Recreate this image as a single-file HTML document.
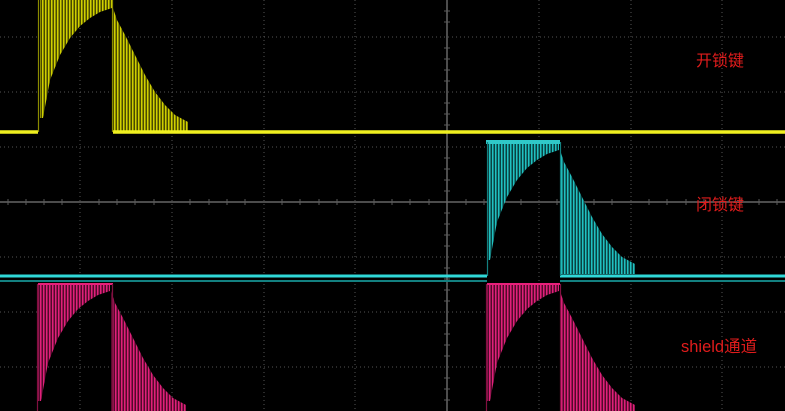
<!DOCTYPE html>
<html><head><meta charset="utf-8"><style>
html,body{margin:0;padding:0;background:#000;overflow:hidden}
svg{display:block}
.t{font-family:"Liberation Sans","Noto Sans CJK SC",sans-serif;font-size:16px;fill:#e01c1c}
</style></head><body>
<svg width="785" height="411" viewBox="0 0 785 411" xmlns="http://www.w3.org/2000/svg">
<defs>
<pattern id="py" width="3" height="6" patternUnits="userSpaceOnUse"><rect width="1.5" height="6" fill="#d0d000"/><rect x="1.5" width="1.5" height="6" fill="#4a4a00"/></pattern>
<pattern id="pc" width="3" height="6" patternUnits="userSpaceOnUse"><rect width="1.5" height="6" fill="#20c0c0"/><rect x="1.5" width="1.5" height="6" fill="#0a4040"/></pattern>
<pattern id="pm" width="3" height="6" patternUnits="userSpaceOnUse"><rect width="1.5" height="6" fill="#e0207a"/><rect x="1.5" width="1.5" height="6" fill="#500a2a"/></pattern>
<g id="env">
<polygon points="40,0 112,0 112,8 100,12 90,18 80,26 70,38 60,55 50,80 43,118 40,118"/>
<polygon points="113,132 113,8 117,20 125,35 135,55 145,75 155,92 165,105 175,115 188,122 188,132"/>
</g>
</defs>
<g stroke="#555" stroke-width="1" stroke-dasharray="1,3">
<line x1="80" y1="0" x2="80" y2="411"/><line x1="172" y1="0" x2="172" y2="411"/><line x1="264" y1="0" x2="264" y2="411"/><line x1="355" y1="0" x2="355" y2="411"/><line x1="539" y1="0" x2="539" y2="411"/><line x1="631" y1="0" x2="631" y2="411"/><line x1="722" y1="0" x2="722" y2="411"/>
<line x1="0" y1="37" x2="785" y2="37"/><line x1="0" y1="92" x2="785" y2="92"/><line x1="0" y1="147" x2="785" y2="147"/><line x1="0" y1="257" x2="785" y2="257"/><line x1="0" y1="312" x2="785" y2="312"/><line x1="0" y1="367" x2="785" y2="367"/>
</g>
<line x1="447" y1="0" x2="447" y2="411" stroke="#666" stroke-width="1.5"/>
<line x1="0" y1="202" x2="785" y2="202" stroke="#666" stroke-width="1.5"/>
<g stroke="#5a5a5a" stroke-width="1">
<path d="M444 11h6M444 22h6M444 48h6M444 59h6M444 70h6M444 81h6M444 103h6M444 114h6M444 125h6M444 158h6M444 169h6M444 180h6M444 191h6M444 213h6M444 224h6M444 235h6M444 246h6M444 268h6M444 279h6M444 290h6M444 301h6M444 323h6M444 334h6M444 345h6M444 356h6M444 378h6M444 389h6M444 400h6"/>
<path d="M8 199v6M26 199v6M44 199v6M62 199v6M99 199v6M117 199v6M135 199v6M154 199v6M190 199v6M209 199v6M227 199v6M245 199v6M282 199v6M300 199v6M319 199v6M337 199v6M374 199v6M392 199v6M410 199v6M429 199v6M466 199v6M484 199v6M502 199v6M521 199v6M557 199v6M576 199v6M594 199v6M612 199v6M649 199v6M667 199v6M686 199v6M704 199v6M741 199v6M759 199v6M777 199v6"/>
</g>
<use href="#env" fill="url(#py)"/>
<path d="M0 132H38M113 132H785" stroke="#f0f020" stroke-width="3.5" fill="none"/>
<path d="M38.5 132V0M112.5 0V132" stroke="#8a8a00" stroke-width="1.2" fill="none"/>
<use href="#env" fill="url(#pc)" transform="translate(447,142)"/>
<rect x="486" y="140" width="74" height="4" fill="#30c8c8"/>
<path d="M0 276H487M560 276H785" stroke="#30d8d8" stroke-width="3" fill="none"/>
<path d="M487.5 276V142M560.5 142V276" stroke="#138080" stroke-width="1.2" fill="none"/>
<path d="M0 281H487M560 281H785" stroke="#138080" stroke-width="2" fill="none"/>
<use href="#env" fill="url(#pm)" transform="translate(-2,283)"/>
<use href="#env" fill="url(#pm)" transform="translate(447,283)"/>
<path d="M38 284H113M487 284H560" stroke="#e8207a" stroke-width="2" fill="none"/>
<path d="M37.5 411V284M112.5 284V411M486.5 411V284M560.5 284V411" stroke="#801040" stroke-width="1.2" fill="none"/>
<text class="t" x="696" y="66">开锁键</text>
<text class="t" x="696" y="210">闭锁键</text>
<text class="t" x="681" y="352" style="font-size:16.5px">shield通道</text>
</svg>
</body></html>
